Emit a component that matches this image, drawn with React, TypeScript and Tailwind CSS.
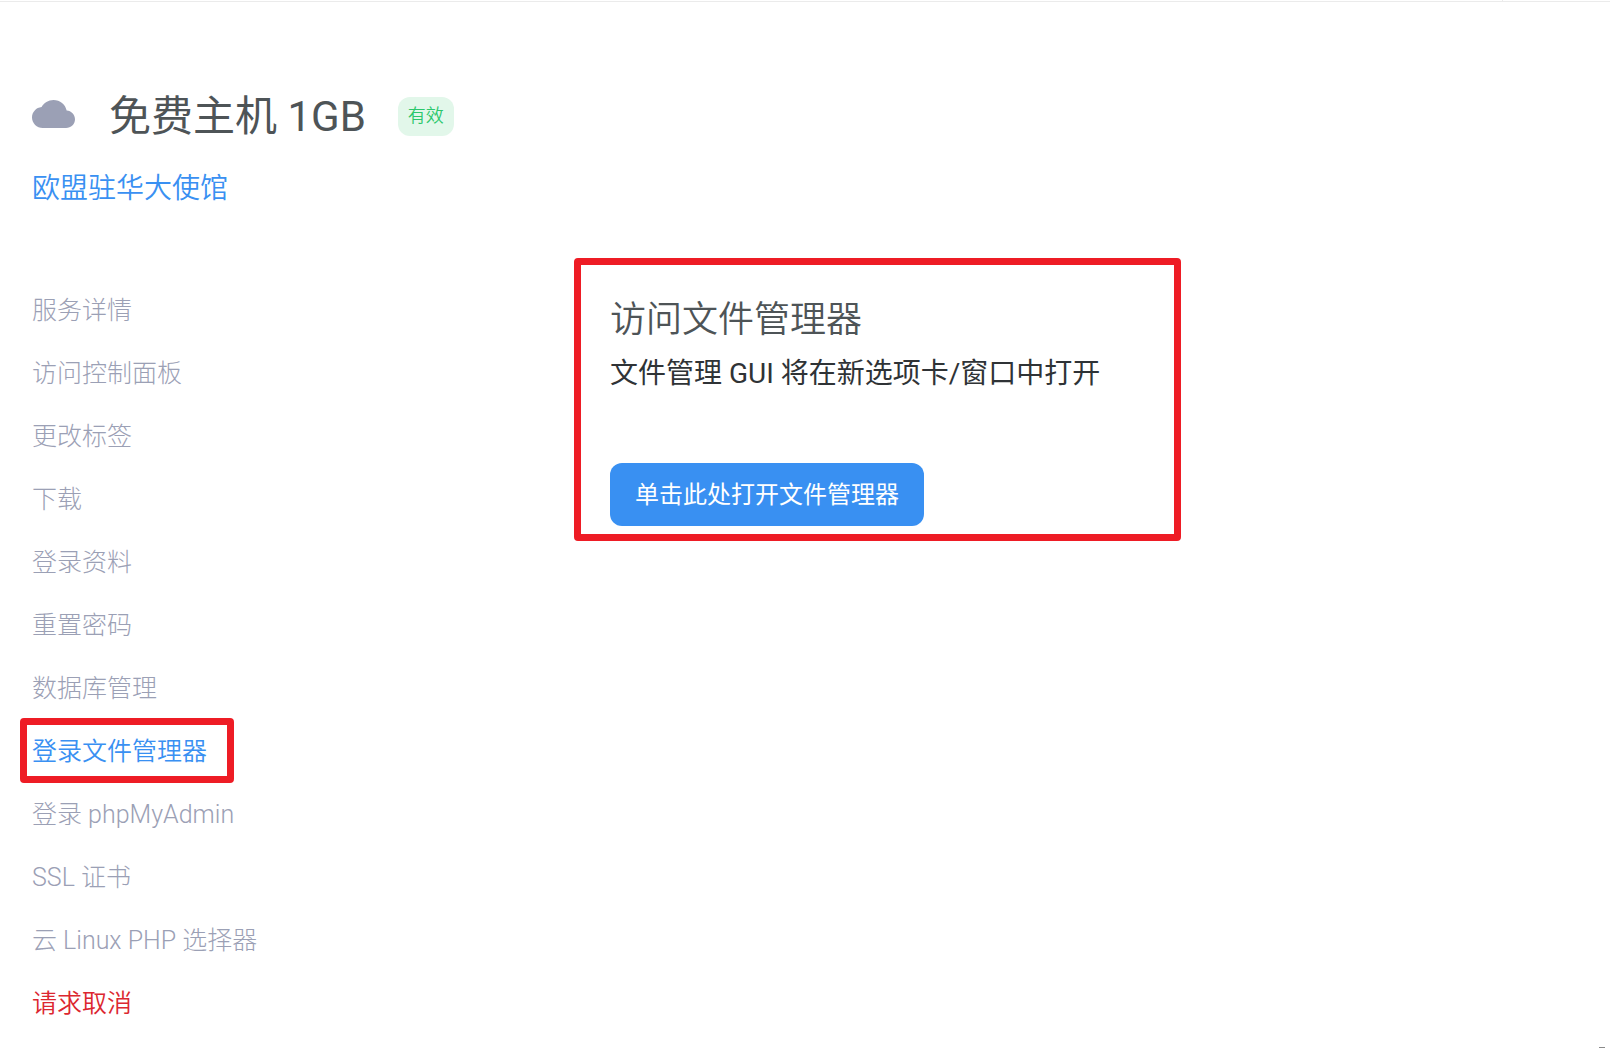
import React, { useState } from "react";

const menuItems = [
  "服务详情",
  "访问控制面板",
  "更改标签",
  "下载",
  "登录资料",
  "重置密码",
  "数据库管理",
  "登录文件管理器",
  "登录 phpMyAdmin",
  "SSL 证书",
  "云 Linux PHP 选择器",
  "请求取消",
];

const CloudIcon = () => (
  <svg viewBox="0 4 24 16" className="w-[43px] h-7 mb-1.5 shrink-0 fill-[#9ba0b5]" preserveAspectRatio="none" aria-hidden="true">
    <path d="M19.35 10.04C18.67 6.59 15.64 4 12 4 9.11 4 6.6 5.64 5.35 8.04 2.34 8.36 0 10.91 0 14c0 3.31 2.69 6 6 6h13c2.76 0 5-2.24 5-5 0-2.64-2.05-4.78-4.65-4.96z" />
  </svg>
);

const App = () => {
  const [active, setActive] = useState("登录文件管理器");

  const itemColor = (item: string) => {
    if (item === active) return "font-[350] text-[#3990f2]";
    if (item === "请求取消") return "font-[350] text-[#dc2730]";
    return "font-light text-[#9ba0b5]";
  };

  return (
    <div className="bg-white text-[#2f3336] font-['Roboto','Noto_Sans_CJK_SC',sans-serif]">
      {/* Bottom edge of the top bar */}
      <div className="h-0.5 border-b border-[#ebebeb] flex justify-end pr-[107px]">
        <div className="w-px bg-[#ebebeb]" />
      </div>

      {/* Service title */}
      <header className="pl-8 pt-[81px]">
        <div className="flex items-center h-[68px]">
          <CloudIcon />
          <h1 className="ml-[34px] text-[42px] leading-[68px] text-[#4e5457]">免费主机 1GB</h1>
          <span className="ml-8 mb-0.5 flex items-center h-[39px] px-2.5 rounded-xl bg-[#e2f7ea] text-lg font-[350] text-[#2bc76c]">
            有效
          </span>
        </div>
        <a href="#" className="inline-block mt-4 text-[28px] leading-[44px] font-[350] text-[#3990f2]">
          欧盟驻华大使馆
        </a>
      </header>

      <main className="flex items-start gap-4 pl-8 mt-[47px]">
        {/* Service menu */}
        <nav className="w-1/3 shrink-0 mt-[21px]">
          <ul>
            {menuItems.map((item) => (
              <li key={item} className="relative h-[63px] flex items-center">
                <a href="#" onClick={() => setActive(item)} className={`text-[25px] ${itemColor(item)}`}>
                  {item}
                </a>
                {item === active && (
                  <div className="absolute -left-3 -top-0.5 w-[214px] h-[65px] border-7 border-[#ee1c25] rounded-sm pointer-events-none" />
                )}
              </li>
            ))}
          </ul>
        </nav>

        {/* File manager */}
        <section className="flex-1 max-w-[607px] border-7 border-[#ee1c25] rounded-sm px-[29px] pt-[30px] pb-2">
          <h2 className="text-4xl leading-[50px] font-[350] text-[#4e5457]">访问文件管理器</h2>
          <p className="text-[28px] leading-[58px]">文件管理 GUI 将在新选项卡/窗口中打开</p>
          <button type="button" className="mt-[60px] block h-[63px] px-[25px] rounded-xl bg-[#3990f2] text-2xl text-white">
            单击此处打开文件管理器
          </button>
        </section>
      </main>

      {/* Mark in the bottom corner */}
      <div className="mt-3 mr-[5px] ml-auto w-1.5 h-px bg-[#8a8a8a]" />
    </div>
  );
};

export default App;
